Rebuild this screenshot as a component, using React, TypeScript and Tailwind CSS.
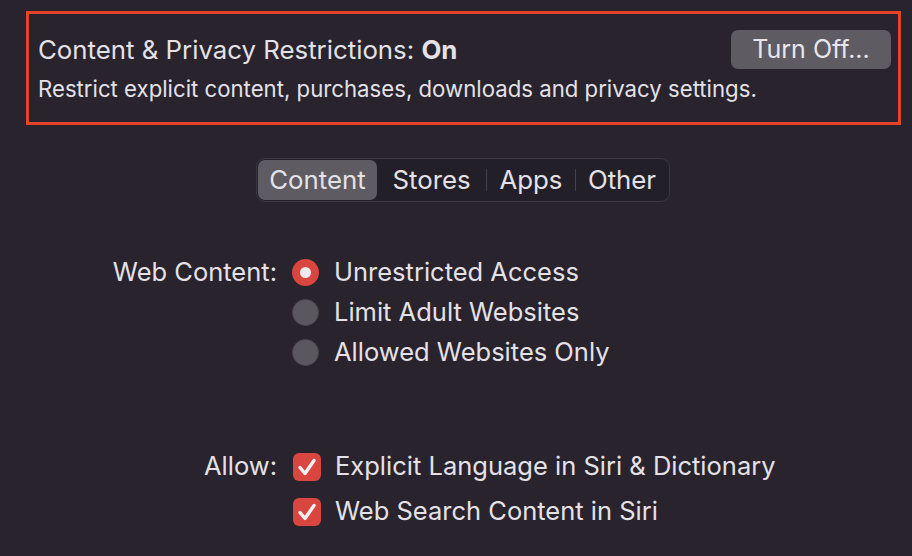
import React from "react";

function Radio({ checked }: { checked?: boolean }) {
  if (checked) {
    return (
      <div className="w-[27px] h-[27px] rounded-full bg-[#d8463f] flex items-center justify-center shrink-0">
        <div className="w-[11px] h-[11px] rounded-full bg-[#ecebee]" />
      </div>
    );
  }
  return <div className="w-[27px] h-[27px] rounded-full bg-[#5a575e] border border-[#4a4750] shrink-0" />;
}

function Check() {
  return (
    <div className="w-[28px] h-[28px] rounded-[6px] bg-[#d8463f] flex items-center justify-center shrink-0">
      <svg width="24" height="24" viewBox="0 0 24 24" fill="none">
        <path d="M5 12.5 L10 18.5 L19 5.5" stroke="#f1eff2" strokeWidth="3.4" strokeLinecap="round" strokeLinejoin="round" />
      </svg>
    </div>
  );
}

export default function App() {
  const font = { fontFamily: 'Inter, "Noto Sans", "Liberation Sans", sans-serif' };
  return (
    <div className="w-[912px] h-[556px] bg-[#28232d] text-[#e4e2e6] overflow-hidden" style={font}>
      <div className="pt-[11px] pl-[26px]">
        <div className="w-[875px] h-[114px] border-[3px] border-[#e5422b] pl-[9px] pr-[7px] pt-[16px] flex flex-col">
          <div className="h-[39px] flex items-center justify-between">
            <div className="text-[25.8px] leading-[30px]">
              Content &amp; Privacy Restrictions: <span className="font-bold">On</span>
            </div>
            <div className="w-[160px] h-[39px] rounded-[7px] bg-[#5e5b62] flex items-center justify-center text-[25px] text-[#e8e6ea]">
              Turn Off...
            </div>
          </div>
          <div className="mt-[6px] text-[22.2px] leading-[28px]">
            Restrict explicit content, purchases, downloads and privacy settings.
          </div>
        </div>

        <div className="w-[874px] flex justify-center mt-[33px]">
          <div className="flex items-center h-[44px] p-px rounded-[9px] border border-[#3c3842] bg-[#231f28] text-[25.8px]">
            <div className="w-[119px] h-[40px] rounded-[7px] bg-[#5e5b62] flex items-center justify-center">Content</div>
            <div className="w-[109px] h-[40px] flex items-center justify-center">Stores</div>
            <div className="w-px h-[22px] bg-[#45414a]" />
            <div className="w-[88px] h-[40px] flex items-center justify-center">Apps</div>
            <div className="w-px h-[22px] bg-[#45414a]" />
            <div className="w-[92px] h-[40px] flex items-center justify-center">Other</div>
          </div>
        </div>
      </div>

      <div className="mt-[50px] flex text-[25.5px]">
        <div className="w-[277px] text-right h-[40px] flex items-center justify-end">Web Content:</div>
        <div className="pl-[15px] flex flex-col">
          <div className="h-[40px] flex items-center gap-[15px]"><Radio checked /><span>Unrestricted Access</span></div>
          <div className="h-[40px] flex items-center gap-[15px]"><Radio /><span>Limit Adult Websites</span></div>
          <div className="h-[40px] flex items-center gap-[15px]"><Radio /><span>Allowed Websites Only</span></div>
        </div>
      </div>

      <div className="mt-[72px] flex text-[25.5px]">
        <div className="w-[277px] h-[45px] flex items-center justify-end">Allow:</div>
        <div className="pl-[16px] flex flex-col">
          <div className="h-[45px] flex items-center gap-[14px]"><Check /><span>Explicit Language in Siri &amp; Dictionary</span></div>
          <div className="h-[45px] flex items-center gap-[14px]"><Check /><span>Web Search Content in Siri</span></div>
        </div>
      </div>
    </div>
  );
}
